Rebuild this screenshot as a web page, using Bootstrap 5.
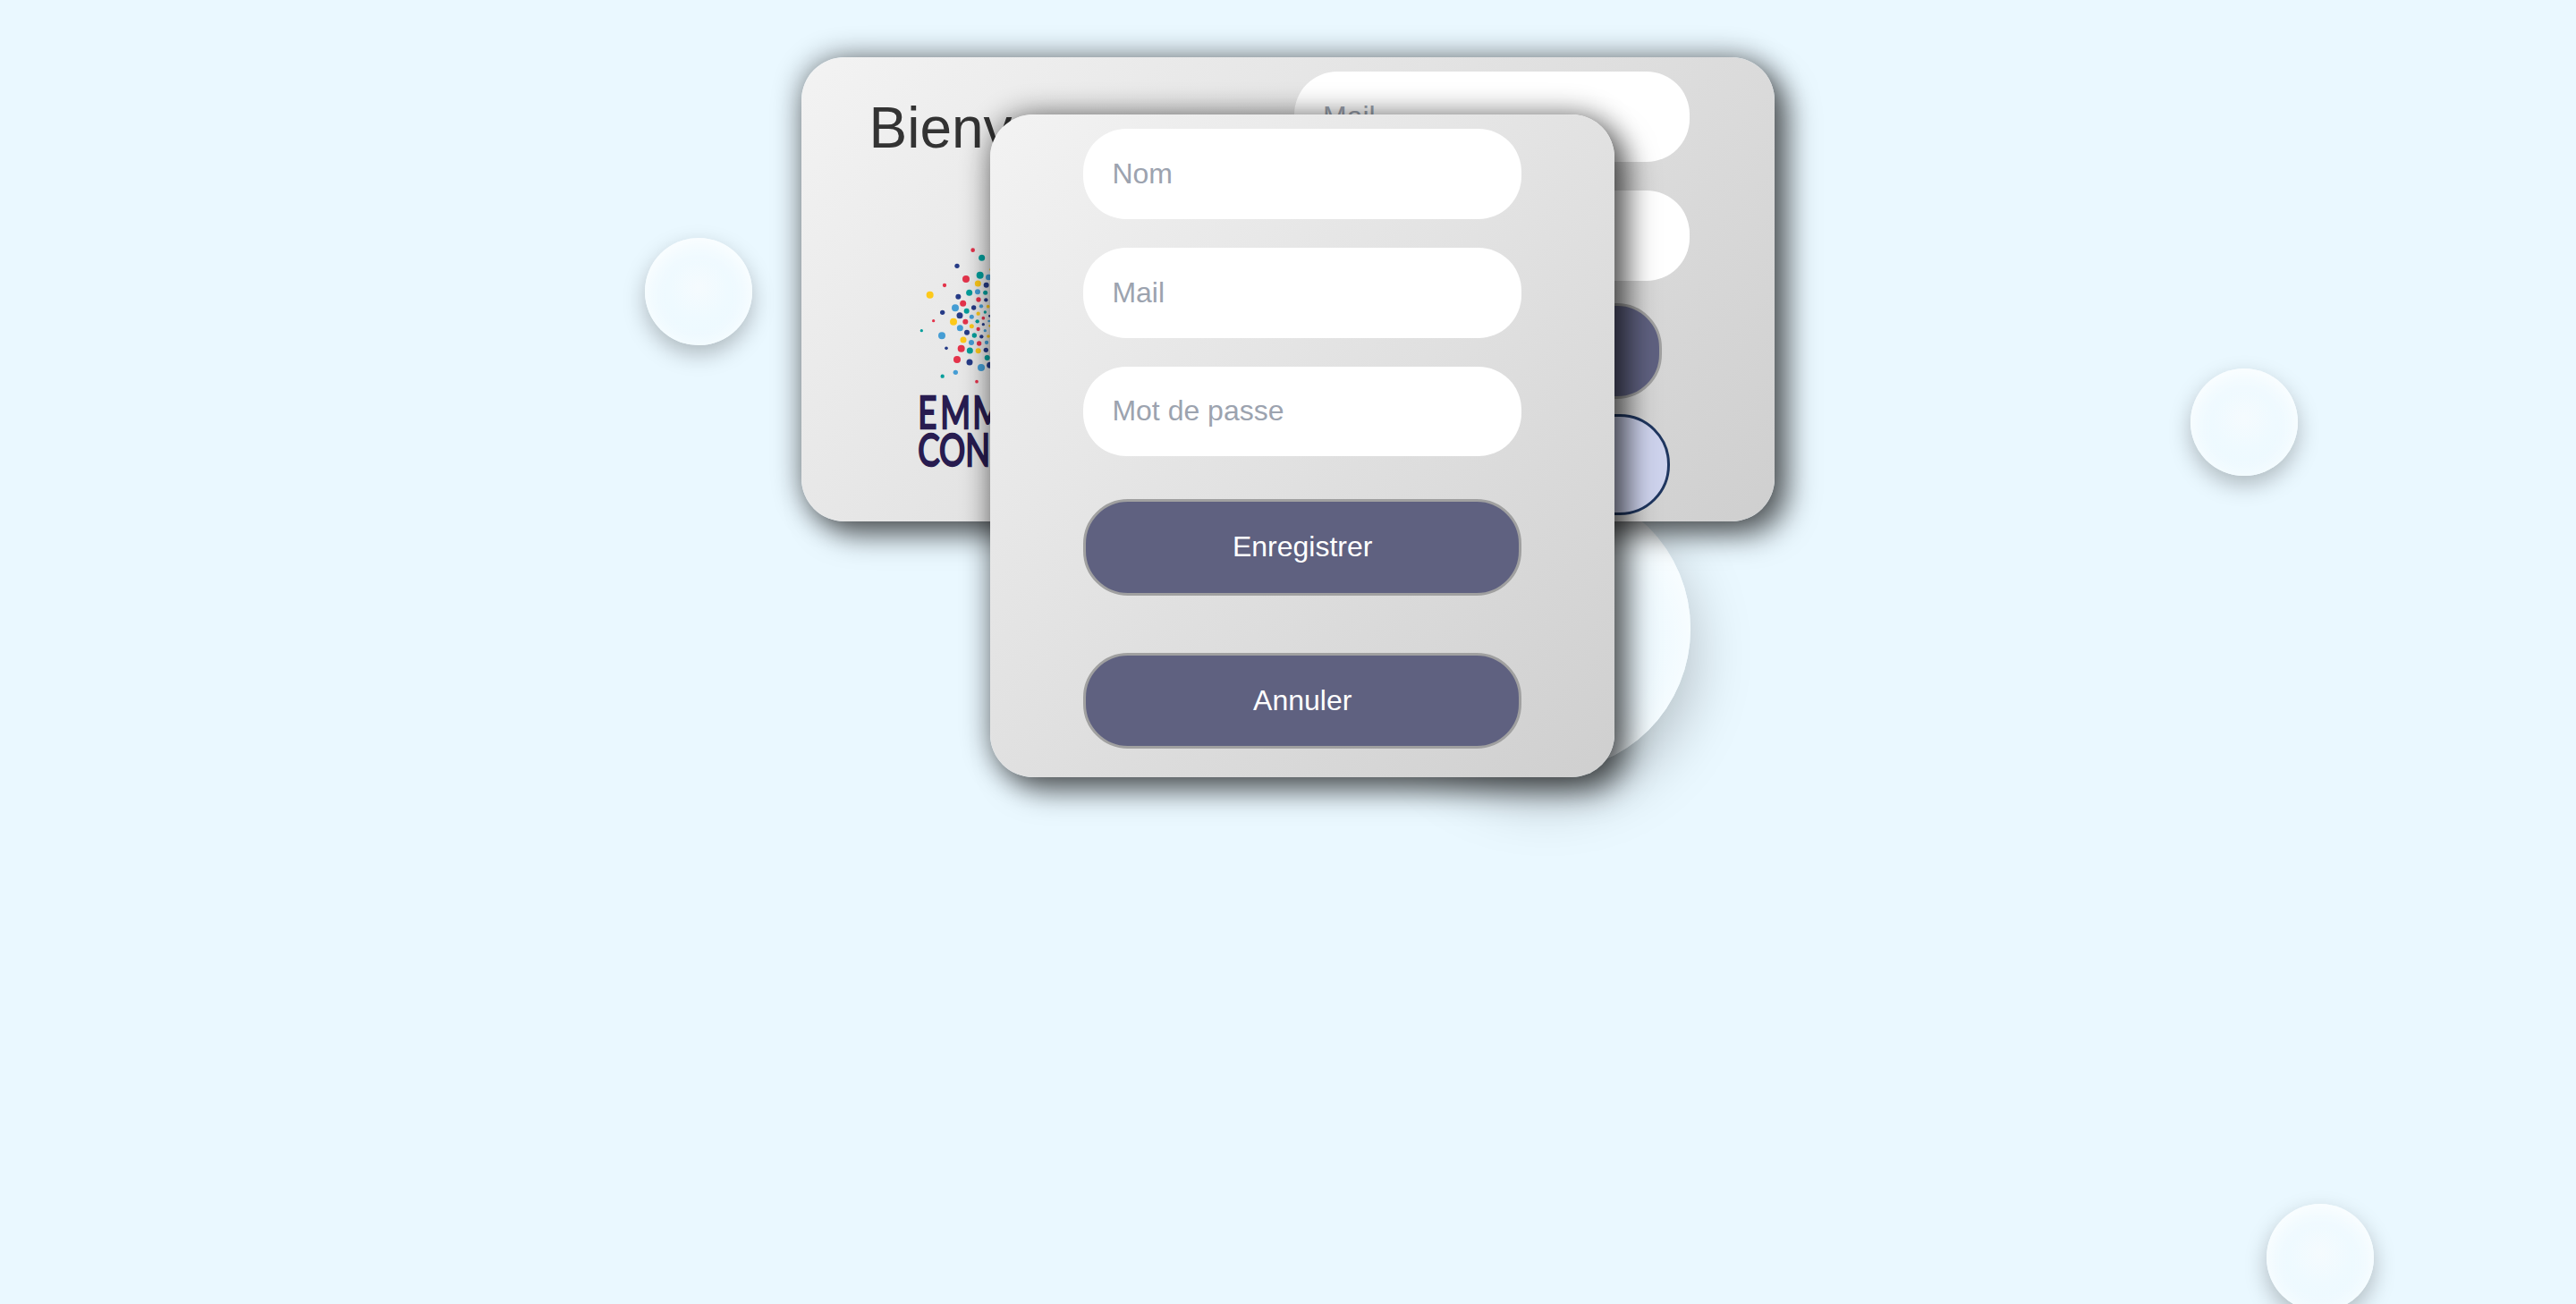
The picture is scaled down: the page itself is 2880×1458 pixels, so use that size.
<!DOCTYPE html>
<html lang="fr">
<head>
<meta charset="utf-8">
<meta name="viewport" content="width=device-width, initial-scale=1">
<title>Emmaüs Connect</title>
<link href="https://cdn.jsdelivr.net/npm/bootstrap@5.3.0/dist/css/bootstrap.min.css" rel="stylesheet">
<style>
  body { background: #eaf8ff; font-family: "Liberation Sans", Arial, sans-serif; font-size: 32px; line-height: 1.15; height: 1458px; color: #333; }
  .panel { background: linear-gradient(135deg, #f3f3f3, #cfcfcf); border-radius: 48px; box-shadow: 16px 16px 32px rgba(0,0,0,.5), 0 0 32px rgba(0,0,0,.48); }
  .login-panel { width: 1088px; height: 518.6px; margin-top: 64px; z-index: 1; }
  .signup-panel { left: 1107.4px; top: 128px; width: 697.6px; height: 740.8px; padding: 16px 104px 32px; z-index: 2; }
  .welcome { width: 551px; padding: 43px 0 0 75.5px; }
  .welcome h1 { font-size: 64px; font-weight: 400; line-height: 1.15; margin-bottom: 79.4px; }
  .logo { width: 220px; height: 300px; margin-left: 38.5px; }
  .login-form { width: 442.4px; padding-top: 16px; }
  .field { height: 100.8px; border: 0; border-radius: 48px; padding: 0 32px; font-size: 32px; line-height: 1.15; margin-bottom: 32px; background: #fff; }
  .field::placeholder { color: #9ca3af; opacity: 1; }
  .action { height: 107.2px; border: 3px solid #a0a0a0; border-radius: 50px; background: #5f6180; color: #fff; font-size: 32px; line-height: 1.15; padding: 0; }
  .gap-fields { margin-top: 16px; margin-bottom: 64px; padding-bottom: 1px; }
  .login-action { width: 379px; margin-top: -6.4px; margin-bottom: 16.6px; }
  .register { width: 398px; height: 112.6px; background: #ced3ed; border-color: #1f365f; color: #1f365f; border-radius: 56px; }
  .bubble { width: 120px; height: 120px; border-radius: 50%; background: radial-gradient(circle at 50% 46%, #f5fbfe 0, #effaff 38%, #ebf9ff 100%); box-shadow: 0 10px 25px rgba(0,0,0,.25), inset 0 5px 26px #fff; }
  .b-one { left: 720.7px; top: 266px; }
  .b-two { left: 2449px; top: 412px; }
  .b-three { left: 2533.5px; top: 1345.8px; }
  .b-large { left: 1570px; top: 543px; width: 320px; height: 320px; box-shadow: 0 27px 67px rgba(0,0,0,.25), inset 0 13px 65px #fff; }
</style>
<script src="https://cdn.jsdelivr.net/npm/bootstrap@5.3.0/dist/js/bootstrap.bundle.min.js"></script>
</head>
<body class="position-relative overflow-hidden d-flow-root">
  <div class="bubble b-one position-absolute"></div>
  <div class="bubble b-two position-absolute"></div>
  <div class="bubble b-three position-absolute"></div>
  <div class="bubble b-large position-absolute"></div>

  <div class="d-flex justify-content-center">
    <main class="panel login-panel position-relative d-flex">
      <section class="welcome">
        <h1>Bienvenue</h1>
        <svg class="logo d-block" viewBox="0 0 660 900" role="img" aria-label="Emmaüs Connect">
          <g fill="#e4334b">
            <circle cx="233" cy="59" r="7"/><circle cx="210" cy="156" r="12"/><circle cx="138" cy="177" r="6.5"/><circle cx="101" cy="296" r="5"/>
            <circle cx="200" cy="238" r="10.5"/><circle cx="252" cy="225" r="8"/><circle cx="208" cy="299" r="9"/><circle cx="268" cy="287" r="5.5"/>
            <circle cx="251" cy="324" r="6.5"/><circle cx="254" cy="372" r="8"/><circle cx="194" cy="389" r="12"/><circle cx="180" cy="426" r="12"/><circle cx="246" cy="500" r="5.5"/>
          </g>
          <g fill="#009e9b">
            <circle cx="263" cy="85" r="10.5"/><circle cx="257" cy="143" r="12"/><circle cx="221" cy="202" r="10.5"/><circle cx="275" cy="202" r="7.5"/>
            <circle cx="212" cy="263" r="9"/><circle cx="274" cy="267" r="5"/><circle cx="248" cy="298" r="6.5"/><circle cx="238" cy="345" r="8"/>
            <circle cx="223" cy="396" r="10.5"/><circle cx="281" cy="420" r="9"/><circle cx="61" cy="329" r="5"/><circle cx="131" cy="482" r="6.5"/>
          </g>
          <g fill="#263b87">
            <circle cx="180" cy="112" r="8"/><circle cx="278" cy="176" r="9"/><circle cx="184" cy="215" r="9"/><circle cx="277" cy="226" r="6.5"/>
            <circle cx="236" cy="252" r="8"/><circle cx="131" cy="268" r="8"/><circle cx="189" cy="278" r="10.5"/><circle cx="289" cy="280" r="4"/>
            <circle cx="268" cy="308" r="5"/><circle cx="213" cy="335" r="9"/><circle cx="262" cy="349" r="6.5"/><circle cx="144" cy="388" r="5.5"/>
            <circle cx="277" cy="394" r="8"/><circle cx="222" cy="435" r="10.5"/><circle cx="290" cy="445" r="10.5"/>
          </g>
          <g fill="#459dd4">
            <circle cx="286" cy="150" r="10"/><circle cx="249" cy="199" r="9"/><circle cx="174" cy="253" r="12"/><circle cx="261" cy="247" r="6.5"/>
            <circle cx="229" cy="283" r="7.5"/><circle cx="190" cy="320" r="10.5"/><circle cx="287" cy="297" r="4"/><circle cx="274" cy="329" r="5"/>
            <circle cx="129" cy="346" r="12"/><circle cx="228" cy="369" r="9"/><circle cx="279" cy="369" r="6.5"/><circle cx="261" cy="453" r="12"/><circle cx="175" cy="469" r="8"/>
          </g>
          <g fill="#fdc91b">
            <circle cx="89" cy="209" r="12"/><circle cx="250" cy="171" r="10.5"/><circle cx="295" cy="124" r="6"/><circle cx="284" cy="248" r="5.5"/>
            <circle cx="251" cy="272" r="6.5"/><circle cx="168" cy="299" r="12"/><circle cx="229" cy="314" r="7.5"/><circle cx="290" cy="313" r="4"/>
            <circle cx="285" cy="348" r="5.5"/><circle cx="201" cy="360" r="10.5"/><circle cx="251" cy="397" r="9"/>
          </g>
          <g fill="#281c50" stroke="#281c50" stroke-width="7" font-family="Lato, sans-serif" font-size="148" transform="scale(.74 1)">
            <text y="658" x="66 167 313 450 560 680">EMMAÜS</text>
            <text y="783" x="66 162 281 400 520 620 710">CONNECT</text>
          </g>
        </svg>
      </section>
      <form class="login-form d-flex flex-column align-items-center">
        <input class="field form-control" type="email" placeholder="Mail">
        <input class="field form-control" type="password" placeholder="Mot de passe">
        <button class="action btn login-action" type="button">Se connecter</button>
        <button class="action btn register" type="button">S'inscrire</button>
      </form>
    </main>
  </div>

  <form class="panel signup-panel position-absolute d-flex flex-column">
    <input class="field form-control" type="text" placeholder="Nom">
    <input class="field form-control" type="email" placeholder="Mail">
    <input class="field form-control" type="password" placeholder="Mot de passe">
    <button class="action btn w-100 gap-fields" type="button">Enregistrer</button>
    <button class="action btn w-100" type="button">Annuler</button>
  </form>
</body>
</html>
